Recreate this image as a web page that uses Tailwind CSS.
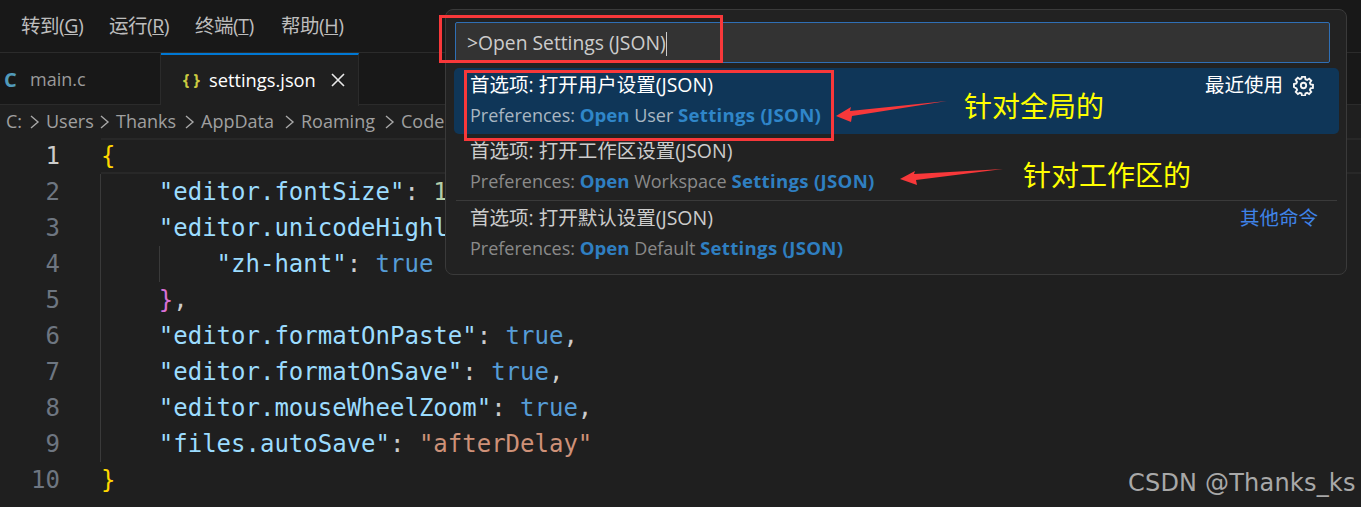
<!DOCTYPE html>
<html lang="en">
<head>
    <meta charset="UTF-8">
    <title>settings.json</title>
    <script src="https://cdn.jsdelivr.net/npm/@tailwindcss/browser@4"></script>
</head>
<body class="bg-[#1f1f1f]">
    <div class="relative w-[1361px] h-[507px] overflow-hidden bg-[#1f1f1f] font-['Open_Sans','Noto_Sans_CJK_SC',sans-serif]">
        <!-- menu bar -->
        <div class="flex items-center h-[53px] pl-[21px] gap-[23px] bg-[#181818] border-b border-[#2b2b2b] text-[19.5px] text-[#bdbdbd] tracking-[-0.5px]">
            <span class="w-[65px]">转到(<u>G</u>)</span>
            <span class="w-[63px]">运行(<u>R</u>)</span>
            <span class="w-[63px]">终端(<u>T</u>)</span>
            <span>帮助(<u>H</u>)</span>
        </div>

        <!-- tabs -->
        <div class="flex h-[52px] bg-[#181818] border-b border-[#2b2b2b]">
            <div class="flex items-center w-[161px] pl-[4px] pt-[2px] border-r border-[#2b2b2b]">
                <span class="w-[26px] text-[20px] font-bold text-[#519aba]">C</span>
                <span class="text-[18px] text-[#9a9a9a]">main.c</span>
            </div>
            <div class="flex items-center w-[198px] h-[53px] pl-[22px] pb-[2px] bg-[#1f1f1f] border-t-2 border-[#0078d4] border-r border-r-[#2b2b2b]">
                <span class="w-[26px] text-[16px] font-bold text-[#cbcb41]">{ }</span>
                <span class="text-[18.3px] text-white">settings.json</span>
                <svg class="ml-[14px]" width="16" height="16" viewBox="0 0 16 16"><path d="M2 2L14 14M14 2L2 14" stroke="#e8e8e8" stroke-width="1.6"/></svg>
            </div>
        </div>

        <!-- breadcrumb -->
        <div class="flex items-center h-[33px] pl-[6px] text-[18px] text-[#a0a0a0] whitespace-nowrap">
            <span class="w-[24px]">C:</span>
            <svg class="w-[16px]" width="16" height="18" viewBox="0 0 16 18"><path d="M1 3L8 9L1 15" fill="none" stroke="#a8a8a8" stroke-width="1.4"/></svg>
            <span class="w-[54px]">Users</span>
            <svg class="w-[16px]" width="16" height="18" viewBox="0 0 16 18"><path d="M1 3L8 9L1 15" fill="none" stroke="#a8a8a8" stroke-width="1.4"/></svg>
            <span class="w-[69px]">Thanks</span>
            <svg class="w-[16px]" width="16" height="18" viewBox="0 0 16 18"><path d="M1 3L8 9L1 15" fill="none" stroke="#a8a8a8" stroke-width="1.4"/></svg>
            <span class="w-[84px]">AppData</span>
            <svg class="w-[16px]" width="16" height="18" viewBox="0 0 16 18"><path d="M1 3L8 9L1 15" fill="none" stroke="#a8a8a8" stroke-width="1.4"/></svg>
            <span class="w-[84px]">Roaming</span>
            <svg class="w-[16px]" width="16" height="18" viewBox="0 0 16 18"><path d="M1 3L8 9L1 15" fill="none" stroke="#a8a8a8" stroke-width="1.4"/></svg>
            <span>Code</span>
        </div>

        <!-- editor: long lines are cut where the palette covers them -->
        <div class="relative flex flex-col font-['DejaVu_Sans_Mono',monospace] text-[24px] leading-[36px] text-[#9cdcfe] whitespace-pre">
            <div class="absolute left-[100px] top-[36px] w-px h-[288px] bg-[#3a3a3a]"></div>
            <div class="absolute left-[159px] top-[108px] w-px h-[36px] bg-[#3a3a3a]"></div>
            <div class="flex h-[36px]"><span class="w-[60px] text-right text-[#cccccc]">1</span><span class="ml-[41px] flex-1 text-[#ffd700] bg-[#1f1f1f] border-y-2 border-[#282828] leading-[32px]">{</span></div>
            <div class="flex h-[36px]"><span class="w-[60px] text-right text-[#6e7681]">2</span><span class="ml-[41px] w-[344px] overflow-hidden">    "editor.fontSize"<span class="text-[#cccccc]">: </span><span class="text-[#b5cea8]">1</span></span></div>
            <div class="flex h-[36px]"><span class="w-[60px] text-right text-[#6e7681]">3</span><span class="ml-[41px] w-[344px] overflow-hidden">    "editor.unicodeHighl</span></div>
            <div class="flex h-[36px]"><span class="w-[60px] text-right text-[#6e7681]">4</span><span class="ml-[41px]">        "zh-hant"<span class="text-[#cccccc]">: </span><span class="text-[#569cd6]">true</span></span></div>
            <div class="flex h-[36px]"><span class="w-[60px] text-right text-[#6e7681]">5</span><span class="ml-[41px]">    <span class="text-[#da70d6]">}</span><span class="text-[#cccccc]">,</span></span></div>
            <div class="flex h-[36px]"><span class="w-[60px] text-right text-[#6e7681]">6</span><span class="ml-[41px]">    "editor.formatOnPaste"<span class="text-[#cccccc]">: </span><span class="text-[#569cd6]">true</span><span class="text-[#cccccc]">,</span></span></div>
            <div class="flex h-[36px]"><span class="w-[60px] text-right text-[#6e7681]">7</span><span class="ml-[41px]">    "editor.formatOnSave"<span class="text-[#cccccc]">: </span><span class="text-[#569cd6]">true</span><span class="text-[#cccccc]">,</span></span></div>
            <div class="flex h-[36px]"><span class="w-[60px] text-right text-[#6e7681]">8</span><span class="ml-[41px]">    "editor.mouseWheelZoom"<span class="text-[#cccccc]">: </span><span class="text-[#569cd6]">true</span><span class="text-[#cccccc]">,</span></span></div>
            <div class="flex h-[36px]"><span class="w-[60px] text-right text-[#6e7681]">9</span><span class="ml-[41px]">    "files.autoSave"<span class="text-[#cccccc]">: </span><span class="text-[#ce9178]">"afterDelay"</span></span></div>
            <div class="flex h-[36px]"><span class="w-[60px] text-right text-[#6e7681]">10</span><span class="ml-[41px] text-[#ffd700]">}</span></div>
        </div>

        <!-- command palette -->
        <div class="absolute left-[445px] top-[9px] w-[902px] h-[266px] rounded-[8px] bg-[#222222] border border-[#3a3a3a] pl-[8px] pr-[7px] pt-[12px]">
            <div class="flex items-center ml-[1px] w-[875px] h-[41px] pl-[11px] pt-[2px] rounded-[2px] bg-[#333333] border border-[#2f6fb5] text-[19.3px] text-[#cccccc]">
                <span>&gt;Open Settings (JSON)</span><span class="w-px h-[24px] bg-[#cccccc]"></span>
            </div>
            <div class="mt-[5px] flex flex-col">
                <div class="relative h-[66px] pl-[16px] pt-[2px] rounded-[5px] bg-[#0f3658]">
                    <div class="text-[19.5px] leading-[30px] text-white">首选项: 打开用户设置(JSON)</div>
                    <div class="text-[18px] leading-[30px] text-[#a9b6c2]">Preferences: <b class="text-[18.6px] text-[#2f86c9]">Open</b> User <b class="text-[18.6px] tracking-[0.3px] text-[#2f86c9]">Settings (JSON)</b></div>
                    <div class="absolute right-[25px] top-[2px] flex items-center gap-[10px] text-[19.5px] leading-[30px] text-white">
                        <span>最近使用</span>
                        <svg width="21" height="21" viewBox="0 0 22 22" fill="none" stroke="#f4f4f4" stroke-width="2"><path d="M9.4 2h3.2l.5 2.5 1.7.7 2.1-1.4 2.2 2.2-1.4 2.1.7 1.7 2.5.5v3.2l-2.5.5-.7 1.7 1.4 2.1-2.2 2.2-2.1-1.4-1.7.7-.5 2.5H9.4l-.5-2.5-1.7-.7-2.1 1.4-2.2-2.2 1.4-2.1-.7-1.7L1 12.6V9.4l2.5-.5.7-1.7-1.4-2.1L5 2.9l2.1 1.4 1.7-.7z"/><circle cx="11" cy="11" r="2.8"/></svg>
                    </div>
                </div>
                <div class="h-[66px] pl-[16px] pt-[2px]">
                    <div class="text-[19.5px] leading-[30px] text-[#cccccc]">首选项: 打开工作区设置(JSON)</div>
                    <div class="text-[18px] leading-[30px] text-[#8a8a8a]">Preferences: <b class="text-[18.6px] text-[#2f7fc1]">Open</b> Workspace <b class="text-[18.6px] tracking-[0.3px] text-[#2f7fc1]">Settings (JSON)</b></div>
                </div>
                <div class="relative h-[67px] ml-[2px] pl-[14px] pt-[2px] border-t border-[#3a3a3a] w-[881px]">
                    <div class="text-[19.5px] leading-[30px] text-[#cccccc]">首选项: 打开默认设置(JSON)</div>
                    <div class="text-[18px] leading-[30px] text-[#8a8a8a]">Preferences: <b class="text-[18.6px] text-[#2f7fc1]">Open</b> Default <b class="text-[18.6px] tracking-[0.3px] text-[#2f7fc1]">Settings (JSON)</b></div>
                    <span class="absolute right-[19px] top-[2px] text-[19.5px] leading-[30px] text-[#3f83e8]">其他命令</span>
                </div>
            </div>
        </div>

        <!-- annotations -->
        <div class="absolute left-[439px] top-[15px] w-[284px] h-[48px] border-[3px] border-[#f8383a]"></div>
        <div class="absolute left-[464px] top-[70px] w-[370px] h-[71px] border-[3px] border-[#f8383a]"></div>
        <svg class="absolute left-[830px] top-[95px]" width="180" height="100" viewBox="0 0 180 100">
            <polygon points="6,21 21,12 20,16 117,6 22,21 21,27" fill="#f8383a"/>
            <polygon points="70,84 85,76 84,79 173,74 86,85 87,90" fill="#f8383a"/>
        </svg>
        <div class="absolute left-[964px] top-[88px] text-[28px] leading-[36px] text-[#ffff00]">针对全局的</div>
        <div class="absolute left-[1023px] top-[157px] text-[28px] leading-[36px] text-[#ffff00]">针对工作区的</div>
        <div class="absolute left-[1128px] top-[466px] font-['DejaVu_Sans'] text-[24px] leading-[34px] text-[#a8a8a8] tracking-[0.2px]">CSDN @Thanks_ks</div>
    </div>
</body>
</html>
